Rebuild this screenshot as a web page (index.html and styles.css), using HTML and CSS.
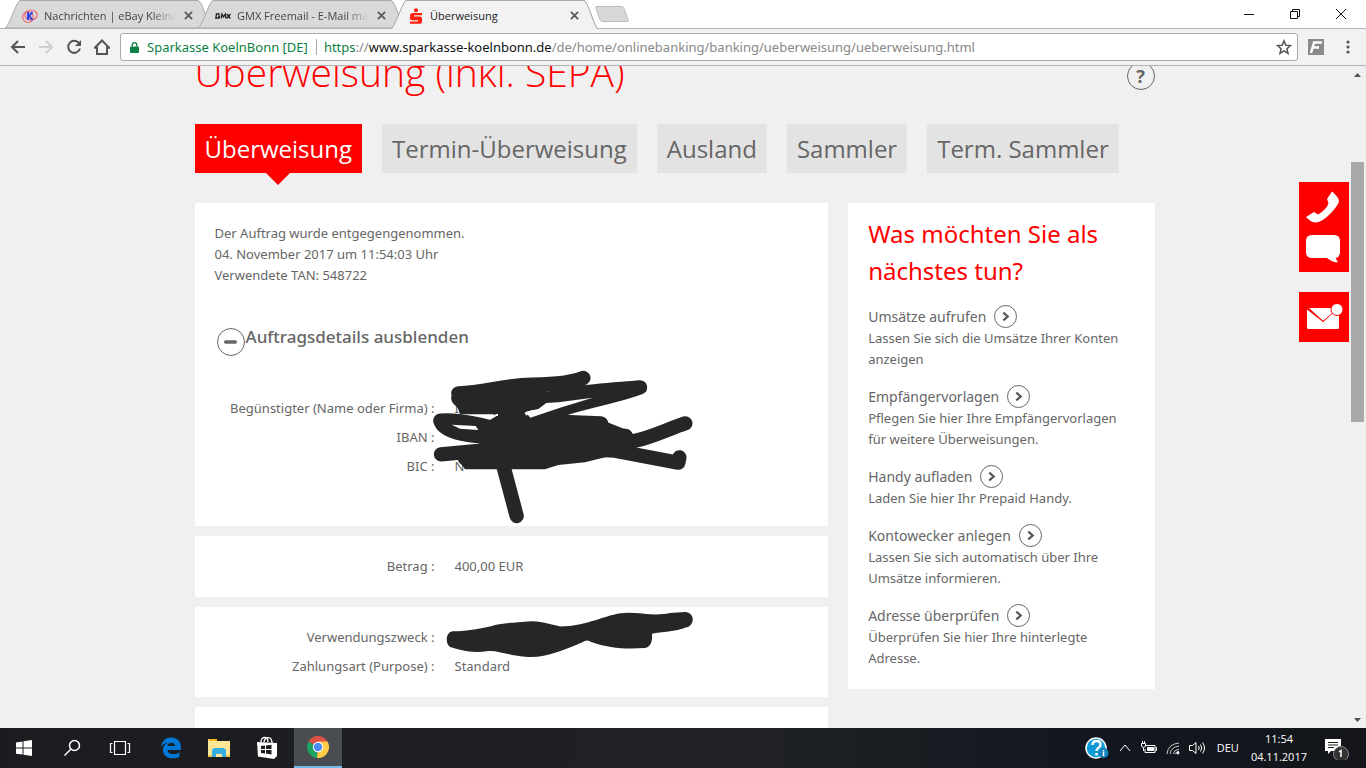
FILE: index.html
```
<!DOCTYPE html>
<html lang="de">
<head>
<meta charset="utf-8">
<meta name="viewport" content="width=device-width, initial-scale=1">
<title>Überweisung</title>
<link rel="stylesheet" href="styles.css">
</head>
<body>
<header class="tabstrip">
  <div class="tab">
    <svg class="tab-shape" viewBox="0 0 207 28" preserveAspectRatio="none" aria-hidden="true"><path d="M0 28C4 27 11 2 15 .5H193C198 2 203 27 207 28Z"/></svg>
    <svg class="favicon" viewBox="0 0 16 16" aria-hidden="true"><g fill="none" stroke="#ee6870" stroke-width="1.2"><ellipse cx="6" cy="9" rx="5.3" ry="5.5"/><ellipse cx="9" cy="7" rx="6.2" ry="5"/></g><path d="M6 4v8M10.500 4 7 8l3.500 4" fill="none" stroke="#3342e0" stroke-width="2"/></svg>
    <span class="tab-title faded">Nachrichten | eBay Kleinanzeigen</span>
    <button class="close" aria-label="Tab schließen"><svg viewBox="0 0 10 10"><path d="m1 1 8 8m0-8-8 8"/></svg></button>
  </div>
  <div class="tab">
    <svg class="tab-shape" viewBox="0 0 207 28" preserveAspectRatio="none" aria-hidden="true"><path d="M0 28C4 27 11 2 15 .5H193C198 2 203 27 207 28Z"/></svg>
    <svg class="favicon" viewBox="0 0 16 16" aria-hidden="true"><path d="M4.800 6H1.500L.8 10h3.400l.4-1.800H3M6.300 10.500 7 6l1.600 3L10.400 6l.5 4.500M12 6l3.300 4.500M15.500 6l-4 4.500" fill="none" stroke="#222" stroke-width="1.300"/></svg>
    <span class="tab-title faded">GMX Freemail - E-Mail made in Germany</span>
    <button class="close" aria-label="Tab schließen"><svg viewBox="0 0 10 10"><path d="m1 1 8 8m0-8-8 8"/></svg></button>
  </div>
  <div class="tab active">
    <svg class="tab-shape" viewBox="0 0 207 28" preserveAspectRatio="none" aria-hidden="true"><path d="M0 28C4 27 11 2 15 .5H193C198 2 203 27 207 28"/></svg>
    <svg class="favicon" viewBox="0 0 16 16" aria-hidden="true"><g fill="#ff1f0f"><circle cx="8" cy="2.200" r="2"/><path d="M5 5h9v2.200H6v1.200h6q2 0 2 2v3.400q0 2-2 2H2v-2.300h8v-1.300H4q-2 0-2-2V8q0-3 3-3Z"/></g></svg>
    <span class="tab-title">Überweisung</span>
    <button class="close" aria-label="Tab schließen"><svg viewBox="0 0 10 10"><path d="m1 1 8 8m0-8-8 8"/></svg></button>
  </div>
  <button class="new-tab" aria-label="Neuer Tab"><svg viewBox="0 0 36 18"><path d="M3 1.500h24q2 0 3 2l4 11q1 2-1 2H9q-2 0-3-2L2 3.500q-1-2 1-2Z" fill="#d8d8d8" stroke="#bbb"/></svg></button>
  <div class="window-buttons">
    <button aria-label="Minimieren"><svg viewBox="0 0 12 12"><path d="M1 6.500h10"/></svg></button>
    <button aria-label="Verkleinern"><svg viewBox="0 0 12 12"><path d="M1.500 3.500h7v7h-7zM3.500 3.500v-2h7v7h-2"/></svg></button>
    <button aria-label="Schließen"><svg viewBox="0 0 12 12"><path d="m1 1 10 10m0-10L1 11"/></svg></button>
  </div>
</header>
<nav class="toolbar" aria-label="Browser">
  <button aria-label="Zurück"><svg viewBox="0 0 16 16"><path d="M15 8H2m6-6L2 8l6 6"/></svg></button>
  <button class="disabled" aria-label="Vorwärts"><svg viewBox="0 0 16 16"><path d="M1 8h13M8 2l6 6-6 6"/></svg></button>
  <button aria-label="Neu laden"><svg viewBox="0 0 16 16"><path d="M13 4.200A6 6 0 1 0 14 9.500"/><path d="M15 1v6H9z" fill="#555" stroke="none"/></svg></button>
  <button aria-label="Startseite"><svg viewBox="0 0 16 16"><path d="M.8 8.800 8 1.500l7.200 7.300H13V15H3V8.800z"/></svg></button>
  <div class="address">
    <svg class="lock" viewBox="0 0 10 14" aria-hidden="true"><path d="M1 6h8q1 0 1 1v5q0 1-1 1H1q-1 0-1-1V7q0-1 1-1Z" fill="#0b8043"/><path d="M2.500 6V4a2.500 2.500 0 0 1 5 0v2" fill="none" stroke="#0b8043" stroke-width="1.500"/></svg>
    <span class="identity">Sparkasse KoelnBonn [DE]</span>
    <span class="url"><span class="secure">https</span>://<span class="host">www.sparkasse-koelnbonn.de</span>/de/home/onlinebanking/banking/ueberweisung/ueberweisung.html</span>
    <button aria-label="Lesezeichen"><svg viewBox="0 0 16 16"><path d="m8 1.800 1.800 4.400 4.700.4-3.600 3.100 1.100 4.600L8 11.800l-4 2.500 1.100-4.600L1.500 6.600l4.700-.4z"/></svg></button>
  </div>
  <button class="extension" aria-label="Erweiterung"><svg viewBox="0 0 16 16"><path d="M0 0h16v16H0z" fill="#8a8a8a" stroke="none"/><path d="m3 14 3-10.500h8M5 8.500h6" stroke="#fff" stroke-width="2.400"/></svg></button>
  <button class="more" aria-label="Menü"><svg viewBox="0 0 16 16"><g fill="#555" stroke="none"><circle cx="8" cy="3" r="1.600"/><circle cx="8" cy="8" r="1.600"/><circle cx="8" cy="13" r="1.600"/></g></svg></button>
</nav>

<div class="viewport">
  <main class="page">
    <div class="page-head">
      <h1>Überweisung (inkl. SEPA)</h1>
      <button class="round help" aria-label="Hilfe">?</button>
    </div>
    <nav class="sections" aria-label="Überweisungsarten">
      <a class="current" href="#">Überweisung</a>
      <a href="#">Termin-Überweisung</a>
      <a href="#">Ausland</a>
      <a href="#">Sammler</a>
      <a href="#">Term. Sammler</a>
    </nav>
    <div class="columns">
      <div class="order">
        <section class="panel receipt">
          <p>Der Auftrag wurde entgegengenommen.<br>04. November 2017 um 11:54:03 Uhr<br>Verwendete TAN: 548722</p>
          <button class="toggle"><span class="round"><svg viewBox="0 0 14 14"><path d="M2.500 6.500h9" stroke="#666" stroke-width="3.200" stroke-linecap="round"/></svg></span><span class="toggle-label">Auftragsdetails ausblenden</span></button>
          <dl class="rows">
            <dt>Begünstigter (Name oder Firma) :</dt><dd>I</dd>
            <dt>IBAN :</dt><dd></dd>
            <dt>BIC :</dt><dd>N</dd>
          </dl>
          <svg class="ink ink-name" viewBox="0 0 840 510" aria-hidden="true">
            <g fill="none" stroke="#262626" stroke-linecap="round" stroke-linejoin="round" stroke-width="43">
              <path d="M100 100C180 97 240 75 320 74C400 72 440 68 475 54"/>
              <path d="M100 115L125 140L330 128C420 96 530 92 645 82C570 112 430 130 320 182"/>
              <path d="M320 182L528 190L240 215C130 180 70 180 46 182C60 230 180 232 300 235L602 228L240 265L48 283"/>
              <path d="M120 295L240 305C400 305 480 260 570 272L760 308L763 292"/>
              <path d="M230 250H560C650 250 710 214 781 190"/>
              <path d="M225 280L275 468"/>
            </g>
            <path d="M90 120 150 82H370L363 125 340 145 310 154 298 158 310 175 525 178 600 208 630 225 620 272 480 307 400 315 360 328H120L100 300 150 260 190 230 160 200 215 168 205 163H105Z" fill="#262626"/>
            <path d="M80 194 152 198 160 210 105 206ZM302 156 340 147 364 129 400 127 503 113 410 142 316 173ZM211 162h8v6h-8Z" fill="#fff"/>
          </svg>
        </section>
        <section class="panel">
          <dl class="rows"><dt>Betrag :</dt><dd>400,00 EUR</dd></dl>
        </section>
        <section class="panel">
          <dl class="rows">
            <dt>Verwendungszweck :</dt><dd></dd>
            <dt>Zahlungsart (Purpose) :</dt><dd>Standard</dd>
          </dl>
          <svg class="ink ink-purpose" viewBox="0 0 840 300" aria-hidden="true"><path d="M82 94C130 94 180 84 210 75C250 68 270 68 320 64C370 65 390 82 420 79C500 74 550 38 610 38C650 38 690 49 735 39L780 36C810 38 810 74 785 82C750 96 710 96 681 101C683 128 675 143 658 144C600 148 550 144 497 125Q485 117 472 127C420 150 360 174 310 171C250 168 220 150 190 153C140 161 105 150 75 141C60 130 62 98 82 94Z" fill="#262626"/></svg>
        </section>
        <section class="panel"></section>
      </div>
      <aside class="panel next">
        <h2>Was möchten Sie als nächstes tun?</h2>
        <ul>
          <li><a href="#">Umsätze aufrufen<span class="round arrow"><svg viewBox="0 0 10 10"><path d="m3 1.500 4 3.500-4 3.500"/></svg></span></a><p>Lassen Sie sich die Umsätze Ihrer Konten anzeigen</p></li>
          <li><a href="#">Empfängervorlagen<span class="round arrow"><svg viewBox="0 0 10 10"><path d="m3 1.500 4 3.500-4 3.500"/></svg></span></a><p>Pflegen Sie hier Ihre Empfängervorlagen für weitere Überweisungen.</p></li>
          <li><a href="#">Handy aufladen<span class="round arrow"><svg viewBox="0 0 10 10"><path d="m3 1.500 4 3.500-4 3.500"/></svg></span></a><p>Laden Sie hier Ihr Prepaid Handy.</p></li>
          <li><a href="#">Kontowecker anlegen<span class="round arrow"><svg viewBox="0 0 10 10"><path d="m3 1.500 4 3.500-4 3.500"/></svg></span></a><p>Lassen Sie sich automatisch über Ihre Umsätze informieren.</p></li>
          <li><a href="#">Adresse überprüfen<span class="round arrow"><svg viewBox="0 0 10 10"><path d="m3 1.500 4 3.500-4 3.500"/></svg></span></a><p>Überprüfen Sie hier Ihre hinterlegte Adresse.</p></li>
        </ul>
      </aside>
    </div>
  </main>
  <div class="contact">
    <div class="contact-group">
      <button aria-label="Telefon"><svg viewBox="0 0 50 50"><path d="M33 9.500q7 6 7 9.500 0 3-7 11Q23 40.500 17 40.500q-5 0-10-5.500l8-5 4 2.500q4-2 7-5.500 3-3 3.500-6L28 17Z"/></svg></button>
      <button aria-label="Chat"><svg viewBox="0 0 50 40"><path d="M13 3h22q6 0 6 6v11q0 5-4 6 0 2 2 4-5 1-11-4H13q-6 0-6-6V9q0-6 6-6Z"/></svg></button>
    </div>
    <button aria-label="Nachricht"><svg viewBox="0 0 50 50"><path d="M8 17.500 24 30 40 17v19q0 1-1 1H9.500Q8 37 8 36ZM10 16h23q0 4 3.500 6L24 29Z"/><path d="m9 16 15 13.500L36 19" fill="none" stroke="#f00"/><circle cx="38" cy="17.500" r="6" stroke="#f00"/></svg></button>
  </div>
  <div class="scrollbar" aria-hidden="true">
    <svg viewBox="0 0 17 17"><path d="M5 11h7L8.500 7z"/></svg>
    <span class="thumb"></span>
    <svg viewBox="0 0 17 17"><path d="M5 7h7l-3.500 4z"/></svg>
  </div>
</div>

<footer class="taskbar">
  <button aria-label="Start"><svg viewBox="0 0 24 24"><path d="m4 6.400 6.500-1v6H4zm7.500-1.200L20 4v7.400h-8.500zM4 12.500h6.500v6.100L4 17.700zm7.500 0H20V20l-8.500-1.300z" fill="#fff"/></svg></button>
  <button aria-label="Suchen"><svg viewBox="0 0 24 24"><g fill="none" stroke="#fff" stroke-width="1.500"><circle cx="14.500" cy="9.500" r="5"/><path d="m11 13-6.500 6.500"/></g></svg></button>
  <button aria-label="Taskansicht"><svg viewBox="0 0 24 24"><path d="M6.500 5.500h11v13h-11zM4.500 7.500h-2v9h2M19.500 7.500h2v9h-2" fill="none" stroke="#fff" stroke-width="1.200"/></svg></button>
  <button class="spaced" aria-label="Edge"><svg viewBox="0 0 24 24"><path d="M2 11C3 4 8 1 13 1.500c6 .5 9 5 9 10V14H8.500c.5 5 7.500 5 12 2.500v4.200C14 24 4 22.500 4 14c0-4 2.500-6.500 5.500-7.500C5.500 7 3.500 8.500 2 11Zm6.500-1H16c0-4.500-7-4.500-7.500 0Z" fill="#0078d7"/></svg></button>
  <button aria-label="Explorer"><svg viewBox="0 0 24 24"><path d="M1 4V3h8l1 2h13v16H1Z" fill="#ffe596"/><path d="M2 3h8v2H2z" fill="#f4b51b"/><path d="M1 19h4v2H1zm18 0h4v2h-4z" fill="#f4c84c"/><path d="M5 21v-7l2-2h10l2 2v7h-4v-3H9v3z" fill="#35aee2"/></svg></button>
  <button aria-label="Store"><svg viewBox="0 0 24 24"><path d="m2 6 20 1v13l-3 3L3 20.500Z" fill="#fff"/><path d="M6 6c0-6 7-6 7 0M9 6c1-6 8-6 8 1" fill="none" stroke="#fff" stroke-width="1.300"/><path d="m6 10 4-.5V13H6zm5-.6 5.500-.7V13H11zM6 14h4v3.500L6 17zm5 0h5.500v4.400l-5.500-.8z" fill="#1b1d20"/></svg></button>
  <button class="spaced open" aria-label="Chrome"><svg viewBox="0 0 24 24"><path d="M12 12 2.500 6.500A11 11 0 0 1 21.500 6.500Z" fill="#dd5144"/><path d="M12 12 11 23A11 11 0 0 1 2.500 6.500Z" fill="#1da362"/><path d="M12 12V6.500h9.500A11 11 0 0 1 11 23Z" fill="#ffcd46"/><circle cx="12" cy="12" r="5.200" fill="#fff"/><circle cx="12" cy="12" r="4.200" fill="#4c8bf5"/></svg></button>
  <div class="tray">
    <svg class="large" viewBox="0 0 24 24" role="img" aria-label="Hilfe"><circle cx="11" cy="12" r="10" fill="#0c9bd7" stroke="#fff" stroke-width="1.500"/><path d="M7.500 9q0-4 4-4t4 3.500q0 2-2 3.200T11.500 15M11.500 17v2.500" fill="none" stroke="#fff" stroke-width="2.500"/><circle cx="18.500" cy="17" r="5" fill="#1583bd"/><path d="M18.500 16v4m0-6v1.500" stroke="#fff" stroke-width="1.500"/></svg>
    <svg class="chevron" viewBox="0 0 16 16" role="img" aria-label="Mehr"><path d="m3 11 5-6 5 6"/></svg>
    <svg viewBox="0 0 16 16" role="img" aria-label="Akku"><path d="M5 5.500h9v7H4V9M14.500 7.500h1v3h-1M.5 3.500h4v3q-2 2-4 0ZM1.500 3.500V1m2 2.500V1M2.500 7.500V11"/><path d="M6.500 7.500h6v3h-6z" fill="#fff"/></svg>
    <svg viewBox="0 0 16 16" role="img" aria-label="WLAN"><path d="M2 14Q3 4 14 3M5 14q1-7 9-8M8 14q1-4 6-5" stroke="#ccc"/><path d="M10.500 14q0-2 3.500-2.500"/><circle cx="13" cy="13" r="1" fill="#fff"/></svg>
    <svg viewBox="0 0 16 16" role="img" aria-label="Lautstärke"><path d="M.5 5.500h3L7 2.500v11l-3.500-3h-3zM9.500 6q1.500 2 0 4M11.500 4.500q2.500 3.500 0 7M13.500 2.500q4 5.500 0 11"/></svg>
    <span class="language">DEU</span>
    <time datetime="2017-11-04T11:54">11:54<br>04.11.2017</time>
    <svg class="large" viewBox="0 0 24 24" role="img" aria-label="Benachrichtigungen"><path d="M0 3h16v12H6l-3 3v-3H0Z" fill="#fff"/><path d="M3 6.500h10M3 9h10M3 11.500h6" stroke="#222"/><circle cx="16" cy="18" r="7.500" fill="#333" stroke="#888"/><path d="m14 16 2-1.500V21" stroke="#fff" stroke-width="1.500" fill="none"/></svg>
  </div>
</footer>
</body>
</html>
```
FILE: styles.css
```
* { box-sizing: border-box; }
body, h1, h2, p, ul, dl, dd { margin: 0; padding: 0; }
body {
  display: flex;
  flex-direction: column;
  height: 100vh;
  overflow: hidden;
  color: #666;
  background: #f0f0f0;
  font: 13px/21px "Noto Sans", "Open Sans", sans-serif;
}
button { padding: 0; border: 0; color: inherit; background: none; font: inherit; }
a { color: inherit; text-decoration: none; }
svg { display: block; flex: none; }

/* Browser window */
.tabstrip {
  display: flex;
  height: 29px;
  padding-left: 5px;
  background: #fff;
  border-bottom: 1px solid #b4b2b4;
  font: 11px/16px "Open Sans", sans-serif;
}
.tab {
  position: relative;
  display: flex;
  align-items: center;
  flex: 0 0 207px;
  min-width: 0;
  height: 29px;
  margin-right: -14px;
  padding: 2px 17px 0;
  color: #444;
}
.tab.active { z-index: 1; margin-right: 0; color: #222; }
.tab-shape { position: absolute; inset: 0; width: 100%; height: 28px; fill: #d9d9d9; stroke: #a9a7a9; }
.active .tab-shape { height: 29px; fill: #f2f2f2; }
.favicon { position: relative; width: 16px; height: 16px; margin-right: 6px; }
.tab-title { position: relative; flex: 1; min-width: 0; overflow: hidden; white-space: nowrap; }
.faded { mask-image: linear-gradient(to right, #000 82%, transparent); }
.close { position: relative; display: flex; margin: 0 2px 0 8px; }
.close svg { width: 9px; height: 9px; fill: none; stroke: #5a5a5a; stroke-width: 2; }
.new-tab { align-self: center; margin-left: -4px; }
.new-tab svg { width: 36px; height: 18px; }
.window-buttons { display: flex; margin-left: auto; padding-right: 2px; }
.window-buttons button { display: grid; place-items: center; width: 46px; height: 27px; }
.window-buttons svg { width: 12px; height: 12px; fill: none; stroke: #111; }
.toolbar {
  display: flex;
  align-items: center;
  gap: 12px;
  height: 37px;
  padding: 0 10px;
  background: #f2f2f2;
  border-bottom: 1px solid #b4b2b4;
}
.toolbar svg { width: 16px; height: 16px; fill: none; stroke: #555; stroke-width: 2; }
.toolbar .disabled svg { stroke: #d0d0d0; }
.address {
  display: flex;
  align-items: center;
  flex: 1;
  min-width: 0;
  height: 28px;
  margin-left: -2px;
  padding: 0 5px 0 9px;
  background: #fff;
  border: 1px solid #aaa;
  border-radius: 3px;
  color: #888;
  font: 13px/20px "Noto Sans", sans-serif;
}
.toolbar .lock { width: 9px; height: 13px; stroke: none; }
.identity { margin-left: 8px; padding-right: 8px; border-right: 1px solid #aaa; line-height: 16px; color: #0b8043; white-space: nowrap; }
.url { flex: 1; min-width: 0; margin-left: 7px; overflow: hidden; white-space: nowrap; }
.secure { color: #0b8043; }
.host { color: #111; }
.toolbar .address button svg { stroke-width: 1.5; }
.extension { margin-left: -2px; }
.more { margin-left: 4px; }

/* Banking page */
.viewport { position: relative; display: flex; flex: 1; min-height: 0; overflow: hidden; }
.page { flex: 1; max-width: 960px; margin: -20px auto 0; }
.page-head { display: flex; align-items: center; justify-content: space-between; height: 60px; }
h1 { align-self: flex-start; color: #f00; font: 300 39px/52px "Open Sans", sans-serif; }
.round { display: grid; place-items: center; flex: none; width: 28px; height: 28px; border: 1px solid #666; border-radius: 50%; }
.help { font-size: 18px; font-weight: 700; }
.sections { display: flex; gap: 20px; margin: 18px 0 30px; font: 500 24px/49px "Open Sans", sans-serif; }
.sections a { position: relative; padding: 0 10px; background: #e3e3e3; white-space: nowrap; }
.sections .current { color: #fff; background: #f00; }
.current::after {
  content: "";
  position: absolute;
  top: 100%;
  left: 50%;
  border: solid transparent;
  border-width: 12px 12px 0;
  border-top-color: #f00;
  transform: translateX(-50%);
}
.columns { display: grid; grid-template-columns: 633fr 306fr; align-items: start; gap: 20px; }
.order { display: grid; gap: 10px; }
.panel { position: relative; min-height: 60px; padding: 16px 20px; background: #fff; }
.receipt { padding: 20px 20px 45px; }
.toggle { display: flex; align-items: center; margin: 42px 0 38px 2px; }
.toggle .round svg { width: 15px; height: 15px; }
.toggle-label { padding-bottom: 10px; margin-left: 1px; font: 500 17px/18px "Noto Sans", sans-serif; }
.rows { display: grid; grid-template-columns: 220px 1fr; column-gap: 20px; grid-auto-rows: 29px; line-height: 29px; }
.rows dt { text-align: right; }
.ink { position: absolute; left: 230px; width: 280px; }
.ink-name { top: 157px; }
.ink-purpose { top: -7px; }
.next { padding: 12px 20px 20px; }
h2 { color: #f00; font: 400 24px/37px "Noto Sans", sans-serif; }
.next ul { display: grid; gap: 15px; margin-top: 16px; padding: 0; list-style: none; }
.next a { display: flex; align-items: center; gap: 8px; height: 23px; font-size: 14px; }
.arrow { width: 23px; height: 23px; }
.arrow svg { width: 11px; height: 11px; fill: none; stroke: #555; stroke-width: 2; }
.contact { position: absolute; top: 116px; right: 17px; display: grid; gap: 20px; width: 50px; }
.contact button { display: block; background: #f00; }
.contact-group { display: grid; }
.contact svg { width: 50px; fill: #fff; }
.scrollbar { display: flex; flex-direction: column; flex: 0 0 17px; background: #f0f0f0; }
.scrollbar svg { width: 17px; height: 17px; fill: #505050; }
.thumb { width: 13px; height: 260px; margin: 79px 2px auto; background: #a8a8a8; }

/* Desktop */
.taskbar { display: flex; height: 40px; background: linear-gradient(90deg, #1b1c20, #202225 55%, #12161e 80%, #14161b); color: #fff; }
.taskbar button { display: grid; place-items: center; width: 48px; height: 40px; }
.taskbar button svg { width: 24px; height: 24px; }
.taskbar .spaced { margin-left: 3px; }
.taskbar .open { background: #4a4d50; border-bottom: 2px solid #76b9ed; }
.tray { display: flex; align-items: center; gap: 8px; margin-left: auto; padding-right: 17px; font: 11px/18px "Open Sans", sans-serif; }
.tray svg { width: 16px; height: 16px; fill: none; stroke: #fff; }
.tray .large { width: 24px; height: 24px; stroke: none; }
.language { margin-left: 4px; }
.tray time { margin: 0 10px 0 4px; text-align: center; }
```
